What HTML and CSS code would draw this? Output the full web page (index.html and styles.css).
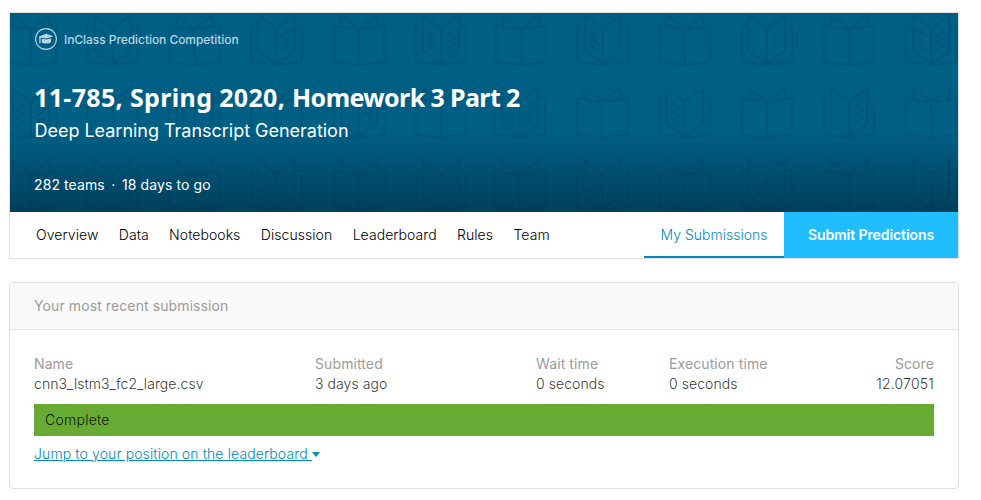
FILE: index.html
```
<!DOCTYPE html>
<html lang="en">
<head>
<meta charset="utf-8">
<title>11-785, Spring 2020, Homework 3 Part 2</title>
<link rel="stylesheet" href="styles.css">
</head>
<body>
<main class="page">
  <section class="competition">
    <header class="banner">
      <svg class="books" viewBox="10 13 948 199" width="948" height="199" aria-hidden="true">
        <defs>
          <g id="plain"><path d="M-25.2 25.5L0 29.5L25.2 25.5V61.8L0 65L-25.2 61.8ZM0 29.5V65M-18 25.500V15.500L0 28.500L18 15.500V25.500"/></g>
          <g id="open"><path d="M0 28.500L18 15.500V51L0 64L-18 51V15.500ZV64M-18 25.500H-25.200V61.800L0 65L25.200 61.800V25.500H18"/></g>
          <path id="lines-r" d="M5 36L14.500 29.500M5 43.300L14.500 36.800M5 50.600L14.500 44.100"/>
          <path id="lines-l" d="M-5 36L-14.500 29.500M-5 43.300L-14.500 36.800M-5 50.600L-14.500 44.100"/>
          <g id="left"><use href="#open"/><use href="#lines-l"/></g>
          <g id="right"><use href="#open"/><use href="#lines-r"/></g>
          <g id="both"><use href="#open"/><use href="#lines-l"/><use href="#lines-r"/></g>
          <g id="tile">
            <use href="#plain"/><use href="#left" x="81.500"/><use href="#plain" x="163.500"/><use href="#right" x="245.500"/><use href="#plain" x="328"/><use href="#both" x="410"/>
            <use href="#both" y="72.700"/><use href="#plain" x="81.500" y="72.700"/><use href="#left" x="163.500" y="72.700"/><use href="#plain" x="245.500" y="72.700"/><use href="#right" x="328" y="72.700"/><use href="#plain" x="410" y="72.700"/>
            <use href="#plain" y="145.400"/><use href="#both" x="81.500" y="145.400"/><use href="#plain" x="163.500" y="145.400"/><use href="#left" x="245.500" y="145.400"/><use href="#plain" x="328" y="145.400"/><use href="#right" x="410" y="145.400"/>
          </g>
          <g id="tile-east">
            <use href="#plain"/><use href="#left" x="81.500"/><use href="#plain" x="163.500"/><use href="#right" x="245.500"/><use href="#plain" x="328"/><use href="#both" x="410"/>
            <use href="#both" x="-1.500" y="72.700"/><use href="#plain" x="81" y="72.700"/><use href="#left" x="163.500" y="72.700"/><use href="#plain" x="245.500" y="72.700"/><use href="#right" x="328" y="72.700"/><use href="#plain" x="410" y="72.700"/>
            <use href="#plain" x="-1.500" y="145.400"/><use href="#both" x="81" y="145.400"/><use href="#plain" x="163.500" y="145.400"/><use href="#left" x="245.500" y="145.400"/><use href="#plain" x="328" y="145.400"/><use href="#right" x="410" y="145.400"/>
          </g>
        </defs>
        <use href="#tile" x="31"/><use href="#tile-east" x="521.300"/>
      </svg>
      <div class="kind">
        <svg width="22" height="22" viewBox="0 0 22 22" aria-hidden="true"><circle cx="11" cy="11" r="10.400" fill="none" stroke="currentColor" stroke-width="1.100"/><path fill="currentColor" d="M3.800 8.600L11.200 5.800L18.400 8.300L11.300 10.600L6 9.800L5.600 10.300V15L4.300 15.500V9ZM6.800 10.700L11.500 11.600L16 10.200V14.300Q13.500 16.200 11.500 15.300Q9 16.200 6.800 14.500Z"/></svg>
        <span class="kind-label">InClass Prediction Competition</span>
      </div>
      <h1 class="title"><span class="term">11-785, Spring 2020, </span>Homework 3 Part 2</h1>
      <p class="subtitle">Deep Learning Transcript Generation</p>
      <p class="meta"><span>282 teams</span><span class="dot">·</span><span>18 days to go</span></p>
    </header>
    <nav class="nav">
      <a>Overview</a><a>Data</a><a>Notebooks</a><a>Discussion</a><a>Leaderboard</a><a>Rules</a><a>Team</a>
      <a class="mine">My Submissions</a>
      <a class="submit">Submit Predictions</a>
    </nav>
  </section>
  <section class="card">
    <h2 class="card-head">Your most recent submission</h2>
    <div class="card-body">
      <dl class="facts">
        <div><dt>Name</dt><dd>cnn3_lstm3_fc2_large.csv</dd></div>
        <div><dt>Submitted</dt><dd>3 days ago</dd></div>
        <div><dt>Wait time</dt><dd>0 seconds</dd></div>
        <div><dt>Execution time</dt><dd>0 seconds</dd></div>
        <div class="score"><dt>Score</dt><dd>12.07051</dd></div>
      </dl>
      <div class="status">Complete</div>
      <a class="jump"><span>Jump to your position on the leaderboard&nbsp;</span><i class="caret"></i></a>
    </div>
  </section>
</main>
</body>
</html>
```
FILE: styles.css
```
* { box-sizing: border-box; }
body { margin: 0; background: #fff; font: 300 14px/20px Inter, sans-serif; letter-spacing: .1px; color: rgba(0,0,0,.87); }
h1, h2, p, dl, dd { margin: 0; }
.page { width: 950px; margin: 12px 0 0 9px; }
.competition { border: 1px solid #dedfe0; }
.banner { position: relative; height: 199px; padding: 14px 24px 0; color: #fff; background: linear-gradient(#005f85 0, #005f85 60%, #00405c 100%); }
.books { position: absolute; left: 0; top: 0; fill: none; stroke: #002b48; stroke-opacity: .16; stroke-width: 2.2; }
.kind, .title, .subtitle, .meta { position: relative; }
.kind { display: flex; align-items: center; height: 24px; padding-left: 1px; gap: 7px; color: #b9d5e0; }
.kind-label { padding-top: 2px; font-size: 12px; font-weight: 500; letter-spacing: -.06px; }
.title { margin-top: 29px; font: 700 25px/34px "Noto Sans", sans-serif; letter-spacing: -.6px; white-space: nowrap; }
.term { letter-spacing: .35px; }
.subtitle { margin-top: 5px; padding-left: .5px; font-size: 18px; line-height: 24px; font-weight: 400; letter-spacing: -.02px; }
.meta { display: flex; margin-top: 32px; font-weight: 400; }
.dot { margin: 0 6.5px; }
.nav { display: flex; height: 46px; padding-left: 15.900px; line-height: 46px; letter-spacing: .06px; color: #000; }
.nav a { padding: 0 10.2px; }
.nav .mine { width: 140px; margin-left: auto; padding: 0; text-align: center; color: #008abb; border-bottom: 2px solid #008abb; letter-spacing: 0; }
.nav .submit { width: 174px; padding: 0; text-align: center; background: #20beff; color: #fff; font-weight: 600; letter-spacing: -.08px; }
.card { height: 207px; margin-top: 23px; border: 1px solid #dedfe0; border-radius: 4px; overflow: hidden; }
.card-head { height: 47px; padding-left: 24px; font-size: 14px; line-height: 46px; font-weight: 400; color: #9b9b9b; background: #fafafa; border-bottom: 1px solid #eaeaea; }
.card-body { padding: 24px; }
.facts { display: grid; grid-template-columns: 281px 221px 133px 1fr auto; }
dt { color: #9b9b9b; font-weight: 400; }
.facts dd { color: rgba(0,0,0,.82); letter-spacing: .07px; }
.score { text-align: right; }
.facts .score dd { letter-spacing: .2px; }
.status { height: 32px; margin: 10px 0 8px; padding-left: 11px; line-height: 32px; background: #67aa34; letter-spacing: .25px; }
.jump { display: flex; align-items: center; color: #008abb; text-decoration: underline; letter-spacing: .12px; }
.caret { border: 4.5px solid transparent; border-top: 5px solid #008abb; border-bottom: 0; }
```
